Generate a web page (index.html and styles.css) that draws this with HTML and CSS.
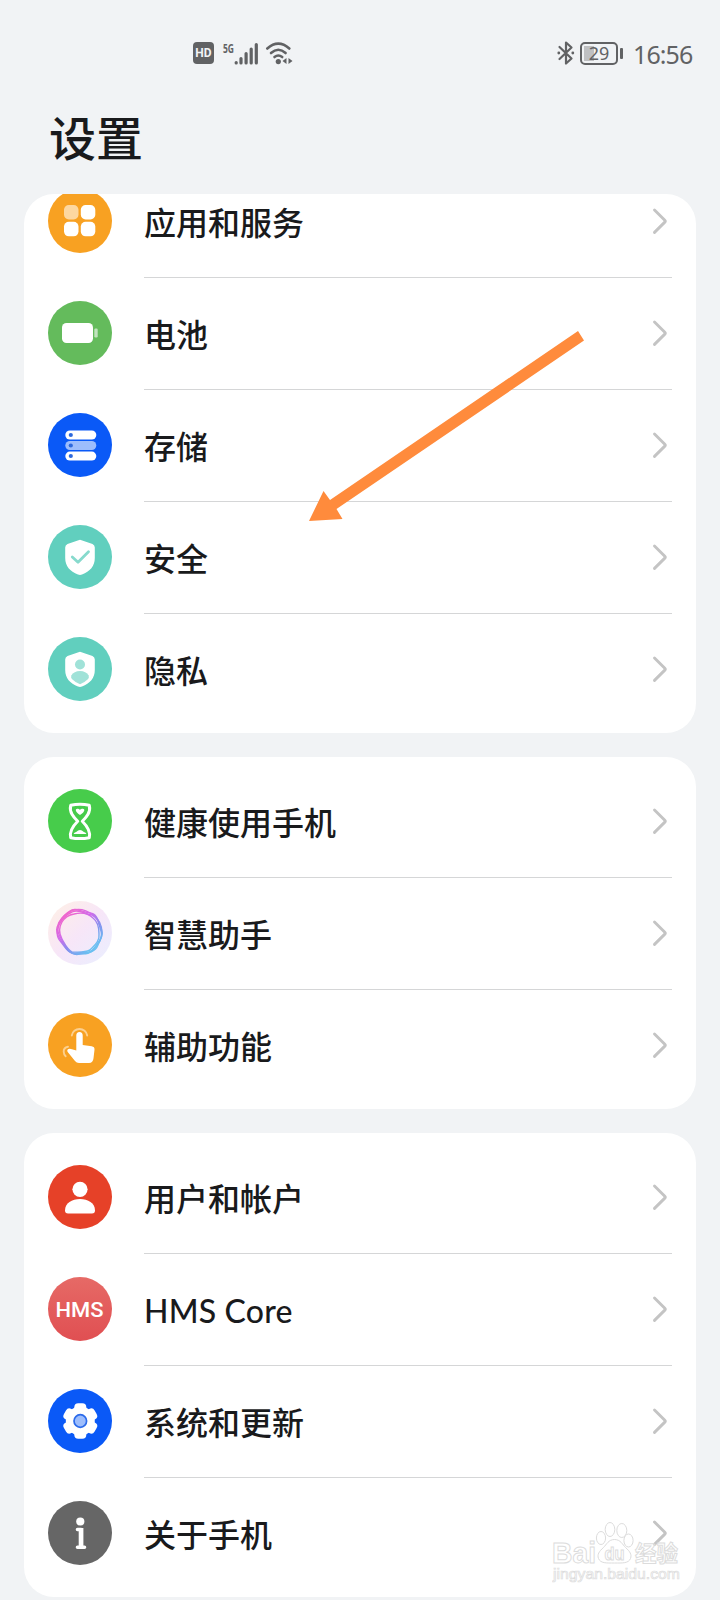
FILE: index.html
```html
<!DOCTYPE html>
<html lang="zh-CN">
<head>
  <meta charset="UTF-8">
  <meta name="viewport" content="width=device-width, initial-scale=1.0">
  <title>设置</title>
  <link rel="stylesheet" href="styles.css">
</head>
<body>
  <svg width="0" height="0" class="defs">
    <symbol id="arrow" viewBox="0 0 16 28">
      <path d="M2.500 3l10.300 10.300q.9.900 0 1.800l-10.300 10.300" fill="none" stroke="#c4c4c4" stroke-width="2.900" stroke-linecap="round"/>
    </symbol>
    <symbol id="shield" viewBox="0 0 64 64">
      <path d="M30.500 15.200Q32 14.400 33.500 15.200L44.500 19Q46.800 20 46.800 22.500V33C46.800 41 42 46.500 34 49.600Q32 50.400 30 49.600C22 46.500 17.200 41 17.200 33V22.500Q17.200 20 19.500 19Z" fill="#fff"/>
    </symbol>
  </svg>

  <div class="status">
    <div class="signal">
      <div class="hd"><span>HD</span></div>
      <svg class="net" width="38" height="26" viewBox="0 0 38 26">
        <text x="1" y="12.500" font-size="12" font-weight="700" textLength="11" lengthAdjust="spacingAndGlyphs" fill="#616264">5G</text>
        <path d="M14.200 22.500V23M19 18.500V23M24.100 13.500V23M29.200 9V23M34.300 4.500V23" stroke="#616264" stroke-width="3.200" stroke-linecap="round"/>
      </svg>
      <svg class="wifi" width="28" height="26" viewBox="0 0 28 26">
        <g fill="none" stroke="#616264" stroke-width="2.600" stroke-linecap="round">
          <path d="M2.300 8.500Q13.300-1.200 24.300 8.500"/>
          <path d="M6 13Q13.300 6.500 20.600 13"/>
          <path d="M9.500 17Q13.300 14 17.200 17"/>
        </g>
        <circle cx="13.300" cy="21.600" r="2.600" fill="#616264"/>
        <path d="M21.500 18v6l-4-3zM23.500 18v6l4-3z" fill="#616264"/>
      </svg>
    </div>
    <div class="power">
      <svg class="bt" width="18" height="26" viewBox="0 0 18 26">
        <path d="M2.500 7L14.500 18.500 9 23.500V2.500L14.500 7.500 2.500 19" fill="none" stroke="#616264" stroke-width="2.200" stroke-linejoin="round" stroke-linecap="round"/>
        <circle cx="1.800" cy="13" r="1.400" fill="#616264"/>
        <circle cx="15.800" cy="13" r="1.400" fill="#616264"/>
      </svg>
      <div class="battery"><span>29</span></div>
      <div class="time">16:56</div>
    </div>
  </div>

  <h1>设置</h1>

  <div class="card scrolled">
    <div class="row">
      <svg class="icon" viewBox="0 0 64 64">
        <circle cx="32" cy="32" r="32" fill="#f8a122"/>
        <rect x="16" y="16" width="14.500" height="14.500" rx="4.800" fill="#fdd7a0"/>
        <rect x="32.800" y="16" width="14.500" height="14.500" rx="4.800" fill="#fff"/>
        <rect x="16" y="32.800" width="14.500" height="14.500" rx="4.800" fill="#fff"/>
        <rect x="32.800" y="32.800" width="14.500" height="14.500" rx="4.800" fill="#fff"/>
      </svg>
      <div class="cell"><span>应用和服务</span><svg class="arrow"><use href="#arrow"/></svg></div>
    </div>
    <div class="row">
      <svg class="icon" viewBox="0 0 64 64">
        <circle cx="32" cy="32" r="32" fill="#64bb5c"/>
        <rect x="14" y="22" width="31" height="20" rx="4.500" fill="#fff"/>
        <rect x="46.300" y="27.500" width="3.400" height="9" rx="1.200" fill="#c1e3be"/>
      </svg>
      <div class="cell"><span>电池</span><svg class="arrow"><use href="#arrow"/></svg></div>
    </div>
    <div class="row">
      <svg class="icon" viewBox="0 0 64 64">
        <circle cx="32" cy="32" r="32" fill="#0a59f7"/>
        <rect x="17.300" y="17.500" width="31" height="9" rx="4.500" fill="#fff"/>
        <rect x="17.300" y="28" width="31" height="9" rx="4.500" fill="#9dbdfc"/>
        <rect x="17.300" y="38.600" width="31" height="9" rx="4.500" fill="#fff"/>
        <g fill="#2c68dd">
          <circle cx="22.800" cy="22" r="2.100"/>
          <circle cx="22.800" cy="32.500" r="2.100"/>
          <circle cx="22.800" cy="43" r="2.100"/>
        </g>
      </svg>
      <div class="cell"><span>存储</span><svg class="arrow"><use href="#arrow"/></svg></div>
    </div>
    <div class="row">
      <svg class="icon" viewBox="0 0 64 64">
        <circle cx="32" cy="32" r="32" fill="#61cfbe"/>
        <use href="#shield"/>
        <path d="M24.300 32l5.700 5.300 10.500-10.500" fill="none" stroke="#87dacd" stroke-width="2.800" stroke-linecap="round" stroke-linejoin="round"/>
      </svg>
      <div class="cell"><span>安全</span><svg class="arrow"><use href="#arrow"/></svg></div>
    </div>
    <div class="row">
      <svg class="icon" viewBox="0 0 64 64">
        <circle cx="32" cy="32" r="32" fill="#61cfbe"/>
        <use href="#shield"/>
        <circle cx="32" cy="27.500" r="5" fill="#a0e2d8"/>
        <path d="M23.300 38.500Q26 34 32 34t8.700 4.500Q41.500 40.500 39.500 42.500 36 46 32 47.300 28 46 24.500 42.500 22.500 40.500 23.300 38.500z" fill="#a0e2d8"/>
      </svg>
      <div class="cell"><span>隐私</span><svg class="arrow"><use href="#arrow"/></svg></div>
    </div>
  </div>

  <div class="card">
    <div class="row">
      <svg class="icon" viewBox="0 0 64 64">
        <circle cx="32" cy="32" r="32" fill="#47cc4b"/>
        <path d="M22.700 16.300Q32 14 41.300 16.300C43 23 38.500 28 34.300 32.300C38.500 36.500 43 42 41.300 48.700Q32 50.500 22.700 48.700C21 42 25.500 36.500 29.700 32.300C25.500 28 21 23 22.700 16.300z" fill="none" stroke="#fff" stroke-width="3" stroke-linejoin="round"/>
        <path d="M32 26c-6-4-4.500-7-2-6.200 1.300.4 2 1 2 1s.8-.7 2-1c2.800-.8 4 2.500-2 6.200zM25.500 45q.5-1.500 3-2.200Q30 41 32 41t3.500 1.800q2.500.7 3 2.200z" fill="#fff"/>
      </svg>
      <div class="cell"><span>健康使用手机</span><svg class="arrow"><use href="#arrow"/></svg></div>
    </div>
    <div class="row">
      <svg class="icon" viewBox="0 0 64 64">
        <defs>
          <linearGradient id="halo" x1="0" y1="0" x2="1" y2="1">
            <stop offset="0" stop-color="#fff0e4"/>
            <stop offset=".5" stop-color="#f7e6f8"/>
            <stop offset="1" stop-color="#e9efff"/>
          </linearGradient>
          <linearGradient id="ring" x1=".15" y1=".1" x2=".8" y2=".9">
            <stop offset="0" stop-color="#ee45c4"/>
            <stop offset=".35" stop-color="#c84ce8"/>
            <stop offset=".65" stop-color="#6b78ec"/>
            <stop offset="1" stop-color="#49b6ef"/>
          </linearGradient>
        </defs>
        <circle cx="32" cy="32" r="32" fill="url(#halo)"/>
        <g fill="none" stroke="url(#ring)" stroke-width="1.400" stroke-linejoin="round" opacity=".8">
          <path d="M22 10C27 6 34 11 42 12C49 13 50 19 52 25C57 33 52 38 50 44C47 52 38 52 32 53C24 55 20 50 16 44C12 38 6 31 10 24C12 17 17 14 22 10z"/>
          <path d="M25 9C33 7 40 10 45 14C51 18 54 24 54 32C54 39 50 43 46 48C41 55 34 52 27 53C21 52 18 47 15 41C11 34 8 30 11 22C14 16 18 12 25 9z"/>
          <path d="M26 13C34 11 40 12 45 17C49 20 51 26 51 33C52 40 47 44 42 49C36 52 30 51 24 51C18 47 17 43 14 38C10 31 11 26 14 21C17 16 20 14 26 13z"/>
          <path d="M24 11C31 7 38 14 44 14C51 17 51 24 53 30C55 37 50 42 47 46C42 54 34 51 29 52C21 54 17 46 13 41C8 36 9 29 11 24C14 18 17 14 24 11z"/>
        </g>
      </svg>
      <div class="cell"><span>智慧助手</span><svg class="arrow"><use href="#arrow"/></svg></div>
    </div>
    <div class="row">
      <svg class="icon" viewBox="0 0 64 64">
        <circle cx="32" cy="32" r="32" fill="#f8a122"/>
        <path d="M28.300 22.500q0-3.500 3.200-3.500t3.200 3.500V32l9 1.300q3 .5 2.800 3.400l-1 8.500q-.5 4.800-4.500 4.800H31q-2.500 0-4-2L19.700 39q-1.200-2.200.8-3 1.500-.5 3.500.3l4.300 1.200z" fill="#fff"/>
        <g fill="none" stroke="#fcd08f" stroke-width="1.900" stroke-linecap="round">
          <path d="M23.800 22.500a7.800 7.800 0 0 1 15.400 0"/>
          <path d="M20 33.700q-4.500 1-4.300 5 .1 2.700 2 4.500"/>
        </g>
      </svg>
      <div class="cell"><span>辅助功能</span><svg class="arrow"><use href="#arrow"/></svg></div>
    </div>
  </div>

  <div class="card">
    <div class="row">
      <svg class="icon" viewBox="0 0 64 64">
        <circle cx="32" cy="32" r="32" fill="#e64128"/>
        <circle cx="32" cy="24.300" r="7.600" fill="#fff"/>
        <path d="M17 45.500C17 38 24 34 32 34s15 4 15 11.500q0 3-3 3H20q-3 0-3-3z" fill="#fff"/>
      </svg>
      <div class="cell"><span>用户和帐户</span><svg class="arrow"><use href="#arrow"/></svg></div>
    </div>
    <div class="row">
      <svg class="icon hms" viewBox="0 0 64 64">
        <text x="7.500" y="39.800" textLength="48" lengthAdjust="spacingAndGlyphs" fill="#fff">HMS</text>
      </svg>
      <div class="cell"><span class="latin">HMS Core</span><svg class="arrow"><use href="#arrow"/></svg></div>
    </div>
    <div class="row">
      <svg class="icon" viewBox="0 0 64 64">
        <circle cx="32" cy="32" r="32" fill="#0a59f7"/>
        <g fill="#fff">
          <circle cx="32.300" cy="32" r="14.500"/>
          <rect x="26.300" y="14.300" width="12" height="35.400" rx="4"/>
          <rect x="26.300" y="14.300" width="12" height="35.400" rx="4" transform="rotate(60 32.300 32)"/>
          <rect x="26.300" y="14.300" width="12" height="35.400" rx="4" transform="rotate(120 32.300 32)"/>
        </g>
        <circle cx="32.300" cy="32" r="6.300" fill="#9dbdfc" stroke="#2c6bea" stroke-width="1.700"/>
      </svg>
      <div class="cell"><span>系统和更新</span><svg class="arrow"><use href="#arrow"/></svg></div>
    </div>
    <div class="row">
      <svg class="icon" viewBox="0 0 64 64">
        <circle cx="32" cy="32" r="32" fill="#666"/>
        <circle cx="32.300" cy="20.500" r="4.100" fill="#fff"/>
        <path d="M29.500 28.500h3.700V46M29.500 46.300h7" fill="none" stroke="#fff" stroke-width="3.600" stroke-linecap="round" stroke-linejoin="round"/>
        <path d="M30.700 27h4.700v19h-4.700z" fill="#fff"/>
      </svg>
      <div class="cell"><span>关于手机</span><svg class="arrow"><use href="#arrow"/></svg></div>
    </div>
  </div>

  <svg class="pointer" width="280" height="194" viewBox="0 0 280 194">
    <path d="M270 0L276 9.500 28.500 178 34.500 188 1 190 15.500 160 22 169z" fill="#ff8b3c"/>
  </svg>

  <svg class="watermark" width="140" height="74" viewBox="0 0 140 74">
    <g fill="#fff" fill-opacity=".4" stroke="#dcdcdc" stroke-width="1">
      <ellipse cx="49" cy="24" rx="4.600" ry="6.500"/>
      <ellipse cx="58" cy="15.500" rx="4.800" ry="7"/>
      <ellipse cx="69.800" cy="16.500" rx="5" ry="7"/>
      <ellipse cx="76.500" cy="26.500" rx="4.600" ry="6.500"/>
      <path d="M62.500 25.500c6 0 8 5 11 8 4.500 4 6.500 7 5 11-2 5-8 4.500-16 4.500s-14 .5-16-4.500c-1.500-4 .5-7 5-11 3-3 5-8 11-8z"/>
      <text x="0" y="48.500" class="baidu" textLength="44" lengthAdjust="spacingAndGlyphs">Bai</text>
      <text x="52.500" y="45.500" class="du" textLength="20" lengthAdjust="spacingAndGlyphs">du</text>
      <text x="83" y="47" class="jingyan" textLength="43" lengthAdjust="spacingAndGlyphs">经验</text>
      <text x="1" y="65" class="url" textLength="127" lengthAdjust="spacingAndGlyphs">jingyan.baidu.com</text>
    </g>
  </svg>
</body>
</html>
```
FILE: styles.css
```css
*{
  box-sizing: border-box;
}
body{
  position: relative;
  height: 1600px;
  margin: 0;
  padding: 0 24px;
  overflow: hidden;
  background-color: #f1f3f5;
  color: #191a1c;
  font-family: "Noto Sans CJK SC", sans-serif;
}
svg{
  display: block;
}
.defs{
  position: absolute;
}
.status{
  display: flex;
  justify-content: space-between;
  align-items: center;
  height: 106px;
  padding: 0 3px 0 169px;
  color: #616264;
  font-family: "Noto Sans", sans-serif;
}
.signal,
.power{
  display: flex;
  align-items: center;
}
.hd{
  width: 21px;
  height: 22px;
  border-radius: 4px;
  background-color: #616264;
  color: #f2f3f5;
  font-family: Roboto, sans-serif;
  font-size: 12px;
  font-weight: 700;
  line-height: 22px;
  text-align: center;
}
.net{
  margin: 0 5px 0 8px;
}
.battery{
  position: relative;
  width: 38px;
  height: 23px;
  margin: 0 15px 0 5px;
  border: 2px solid #616264;
  border-radius: 5px;
  background: linear-gradient(90deg, #bfc0c2 10px, transparent 10px) 2px 2px / 32px 15px no-repeat;
  font-size: 18px;
  line-height: 19px;
  text-align: center;
}
.battery::after{
  content: "";
  position: absolute;
  left: 38px;
  top: 4px;
  width: 3px;
  height: 11px;
  border-radius: 1px;
  background-color: #616264;
}
.time{
  width: 60px;
  padding-top: 2px;
  font-size: 25px;
  line-height: 30px;
  letter-spacing: -.9px;
  white-space: nowrap;
}
h1{
  height: 88px;
  margin: 0;
  padding-left: 25px;
  font-size: 47px;
  font-weight: 500;
  line-height: 59px;
}
.card{
  margin-bottom: 24px;
  padding: 8px 24px;
  border-radius: 30px;
  background-color: #fff;
  overflow: hidden;
}
/* list scrolled under the title */
.card.scrolled{
  height: 539px;
  padding-top: 0;
}
.scrolled .row:first-child{
  margin-top: -29px;
}
.row{
  display: flex;
  align-items: center;
  height: 112px;
}
.icon{
  flex: none;
  width: 64px;
  height: 64px;
  margin-right: 32px;
}
.cell{
  flex: 1;
  display: flex;
  justify-content: space-between;
  align-items: center;
  height: 112px;
  font-size: 32px;
  font-weight: 500;
  line-height: 48px;
}
.row + .row .cell{
  box-shadow: inset 0 1px 0 #d5d6d7;
}
.cell span{
  margin-top: -1px;
}
.cell .latin{
  margin-top: 4px;
  font-family: Lato, sans-serif;
  letter-spacing: .2px;
}
.arrow{
  width: 16px;
  height: 28px;
  margin-right: 4px;
}
.hms{
  border-radius: 50%;
  background: linear-gradient(#e66a66, #e04f52);
  font-family: Roboto, sans-serif;
  font-size: 21px;
  font-weight: 500;
}
.pointer{
  position: absolute;
  left: 308px;
  top: 331px;
}
.watermark{
  position: absolute;
  left: 552px;
  top: 1514px;
}
.watermark text{
  font-family: "Liberation Sans", "Noto Sans CJK SC", sans-serif;
  font-weight: 700;
}
.watermark .baidu{
  font-size: 30px;
}
.watermark .du{
  font-size: 19px;
}
.watermark .jingyan{
  font-size: 22px;
}
.watermark .url{
  font-size: 15px;
  font-weight: 400;
  stroke-width: .7px;
}
```
